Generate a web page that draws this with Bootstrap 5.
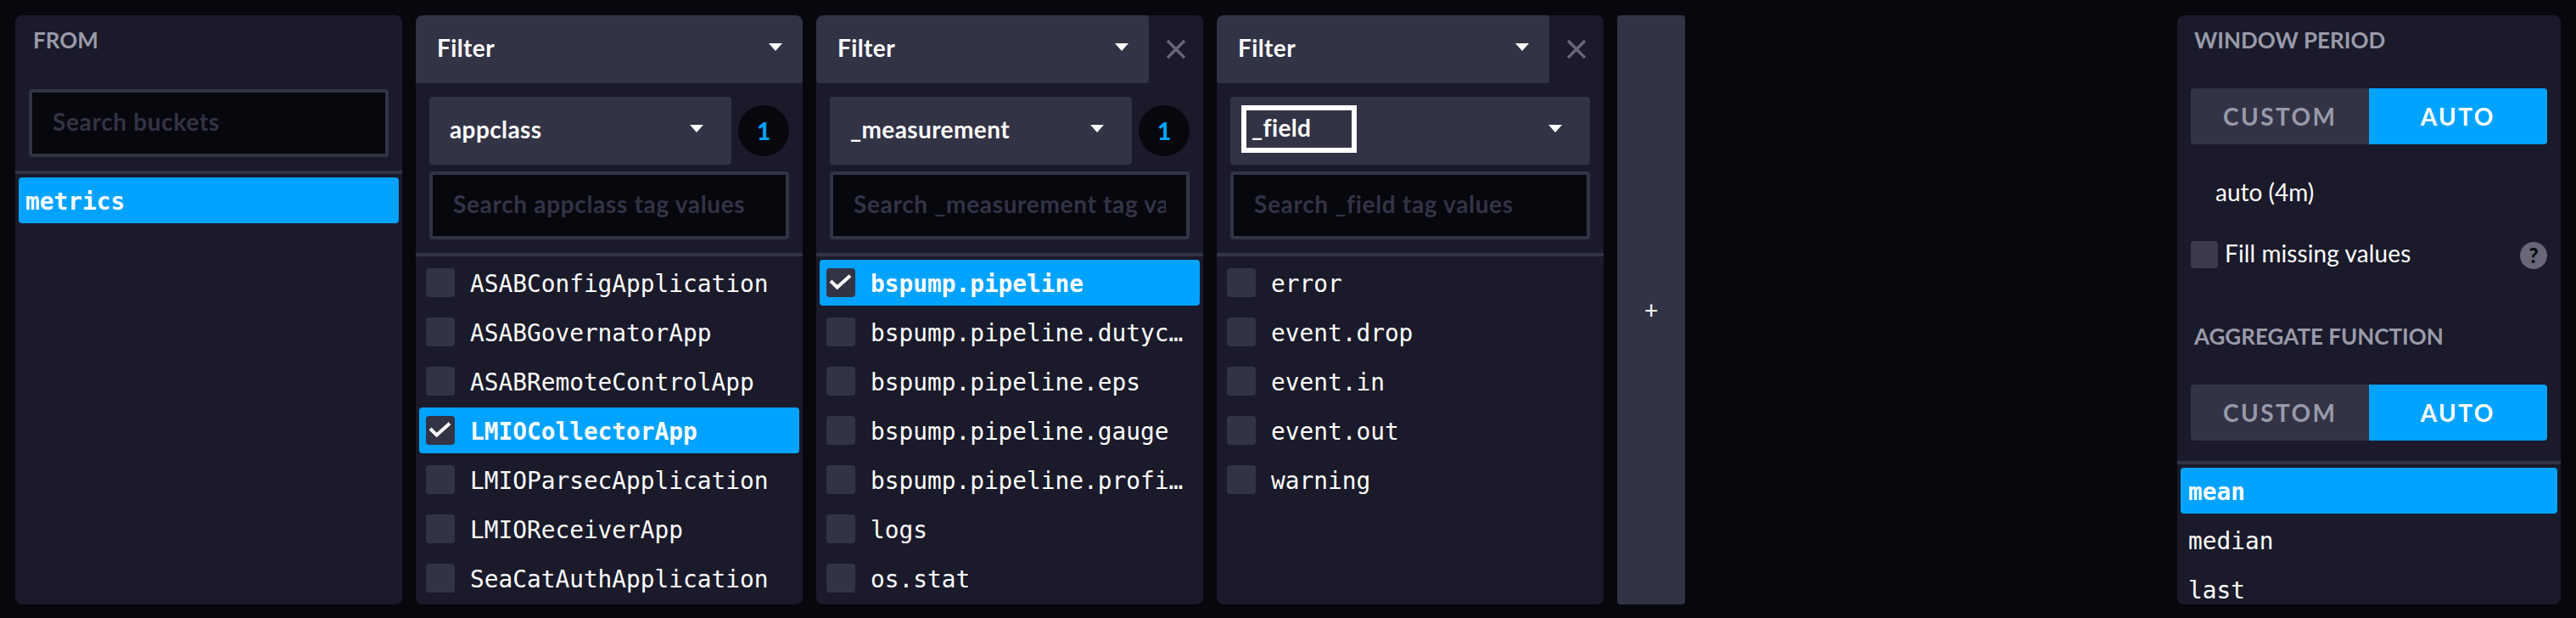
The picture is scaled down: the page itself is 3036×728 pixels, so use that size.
<!DOCTYPE html>
<html lang="en">
<head>
<meta charset="utf-8">
<title>Query builder</title>
<link href="https://cdn.jsdelivr.net/npm/bootstrap@5.3.0/dist/css/bootstrap.min.css" rel="stylesheet">
<style>
:root{--qb-page:#07070e;--qb-panel:#1a1a2a;--qb-grey:#333346;--qb-blue:#00a3ff;}
html,body{height:100%;margin:0;background:var(--qb-page);overflow:hidden;}
body{font-family:Lato,"Liberation Sans",sans-serif;color:#fff;}
.qb-root{height:728px;padding:18px 18px 16px;gap:16px;}
.qb-card{width:456px;background:var(--qb-panel);border-radius:8px;overflow:hidden;flex:none;}
.qb-side{width:452px;}
.qb-head{height:80px;flex:none;}
.qb-sel{background:var(--qb-grey);border:0;border-radius:4px;color:#fff;font-size:28px;font-weight:700;letter-spacing:.4px;display:flex;align-items:center;justify-content:space-between;text-align:left;height:80px;flex:none;--bs-btn-hover-bg:var(--qb-grey);--bs-btn-hover-color:#fff;}
.qb-sel.dropdown-toggle::after{margin:0;border-top:9px solid #fff;border-left:8px solid transparent;border-right:8px solid transparent;border-bottom:0;}
.qb-sel-h{padding:0 24px 5px 25px;border-radius:8px 8px 4px 4px;}
.qb-closable{width:392px;border-radius:8px 4px 4px 4px;}
.qb-x{width:64px;flex:none;color:#676778;}
.qb-tools{padding:16px 16px 16px;gap:8px;}
.qb-sel-k{padding:0 33px 5px 24px;}
.qb-grow{flex:1 1 0;min-width:0;}
.qb-count{width:60px;height:60px;border-radius:50%;background:var(--qb-page);color:var(--qb-blue);font-size:28px;font-weight:900;flex:none;}
.qb-search.form-control{height:80px;background:var(--qb-page);border:4px solid var(--qb-grey);border-radius:4px;padding:0 24px 4px;font-size:28px;font-weight:700;letter-spacing:.67px;color:#fff;box-shadow:none;}
.qb-search.form-control::placeholder{color:var(--qb-grey);opacity:1;}
.qb-from-title{font-size:26px;font-weight:700;color:#999aa9;line-height:32px;padding:13px 21px 0;height:87px;flex:none;}
.qb-from-search{padding:0 16px 16px;}
.qb-rule{height:4px;background:var(--qb-grey);flex:none;}
.qb-list{padding:4px;gap:4px;overflow:hidden;min-height:0;}
.qb-item{height:54px;flex:none;border-radius:4px;padding:0 16px 0 8px;gap:18px;font-family:"DejaVu Sans Mono","Liberation Mono",monospace;font-size:27.8px;color:#fff;}
.qb-item.qb-on{background:var(--qb-blue);font-weight:700;}
.qb-name{white-space:nowrap;overflow:hidden;text-overflow:ellipsis;min-width:0;padding-top:3px;}
.qb-box{width:34px;height:34px;border-radius:4px;background:var(--qb-grey);flex:none;}
.qb-box svg{display:block;}
.qb-focus{border:6px solid #fff;padding:0 0 0 6px;width:136px;height:56px;line-height:40px;margin:0 0 -1px -11px;}
.qb-add{width:80px;flex:none;background:var(--qb-grey);border:0;border-radius:4px;color:#fff;font-size:28px;font-weight:400;padding:0;--bs-btn-hover-bg:var(--qb-grey);--bs-btn-hover-color:#fff;}
.qb-side-title{padding:13px 20px 0;height:86px;}
.qb-toggle{margin:0 16px;height:66px;flex:none;}
.qb-toggle .btn{flex:1 1 0;border:0;font-size:28px;font-weight:700;letter-spacing:2.4px;display:flex;align-items:center;justify-content:center;padding:0 0 1px;--bs-btn-border-radius:4px;}
.qb-off{background:var(--qb-grey);color:#999aa9;--bs-btn-hover-bg:var(--qb-grey);--bs-btn-hover-color:#999aa9;}
.qb-act{background:var(--qb-blue);color:#fff;--bs-btn-hover-bg:var(--qb-blue);--bs-btn-hover-color:#fff;}
.qb-auto{font-size:28px;padding:0 45px;height:56px;margin-top:28px;line-height:56px;flex:none;}
.qb-fill{margin:30px 16px 0;height:32px;flex:none;font-size:28px;}
.qb-fill-label{padding-bottom:4px;letter-spacing:.1px;}
.qb-sq{width:32px;height:32px;border-radius:4px;background:#3a3a4c;flex:none;margin-right:8px;}
.qb-help{width:32px;height:32px;border-radius:50%;background:#676778;color:var(--qb-page);font-size:24px;font-weight:900;margin:1px 0 -1px auto;flex:none;}
.qb-title2{padding:64px 20px 0;height:137px;}
.qb-side-list{padding:4px 4px 0;}
.qb-side-list .qb-item{padding-left:9px;}
</style>
</head>
<body>
<div class="qb-root d-flex align-items-stretch">
  <section class="qb-card d-flex flex-column">
    <div class="qb-from-title">FROM</div>
    <div class="qb-from-search"><input class="form-control qb-search" placeholder="Search buckets"></div>
    <div class="qb-rule"></div>
    <div class="qb-list d-flex flex-column flex-grow-1">
      <div class="qb-item qb-on d-flex align-items-center"><span class="qb-name">metrics</span></div>
    </div>
  </section>

  <section class="qb-card d-flex flex-column">
    <button class="btn dropdown-toggle qb-sel qb-sel-h qb-head w-100" type="button">Filter</button>
    <div class="qb-tools d-flex flex-column">
      <div class="d-flex align-items-center gap-2">
        <button class="btn dropdown-toggle qb-sel qb-sel-k qb-grow" type="button">appclass</button>
        <div class="qb-count d-flex align-items-center justify-content-center">1</div>
      </div>
      <input class="form-control qb-search" placeholder="Search appclass tag values">
    </div>
    <div class="qb-rule"></div>
    <div class="qb-list d-flex flex-column flex-grow-1">
      <div class="qb-item d-flex align-items-center"><span class="qb-box"></span><span class="qb-name">ASABConfigApplication</span></div>
      <div class="qb-item d-flex align-items-center"><span class="qb-box"></span><span class="qb-name">ASABGovernatorApp</span></div>
      <div class="qb-item d-flex align-items-center"><span class="qb-box"></span><span class="qb-name">ASABRemoteControlApp</span></div>
      <div class="qb-item qb-on d-flex align-items-center"><span class="qb-box"><svg width="34" height="34" viewBox="0 0 34 34"><path d="M5 15 L12.7 22.5 L28 8.7" fill="none" stroke="#fff" stroke-width="4"/></svg></span><span class="qb-name">LMIOCollectorApp</span></div>
      <div class="qb-item d-flex align-items-center"><span class="qb-box"></span><span class="qb-name">LMIOParsecApplication</span></div>
      <div class="qb-item d-flex align-items-center"><span class="qb-box"></span><span class="qb-name">LMIOReceiverApp</span></div>
      <div class="qb-item d-flex align-items-center"><span class="qb-box"></span><span class="qb-name">SeaCatAuthApplication</span></div>
    </div>
  </section>

  <section class="qb-card d-flex flex-column">
    <div class="d-flex qb-head">
      <button class="btn dropdown-toggle qb-sel qb-sel-h qb-closable" type="button">Filter</button>
      <div class="qb-x d-flex align-items-center justify-content-center"><svg width="24" height="24" viewBox="0 0 24 24"><path d="M2 2 L22 22 M22 2 L2 22" stroke="#676778" stroke-width="3.4" fill="none"/></svg></div>
    </div>
    <div class="qb-tools d-flex flex-column">
      <div class="d-flex align-items-center gap-2">
        <button class="btn dropdown-toggle qb-sel qb-sel-k qb-grow" type="button">_measurement</button>
        <div class="qb-count d-flex align-items-center justify-content-center">1</div>
      </div>
      <input class="form-control qb-search" placeholder="Search _measurement tag values">
    </div>
    <div class="qb-rule"></div>
    <div class="qb-list d-flex flex-column flex-grow-1">
      <div class="qb-item qb-on d-flex align-items-center"><span class="qb-box"><svg width="34" height="34" viewBox="0 0 34 34"><path d="M5 15 L12.7 22.5 L28 8.7" fill="none" stroke="#fff" stroke-width="4"/></svg></span><span class="qb-name">bspump.pipeline</span></div>
      <div class="qb-item d-flex align-items-center"><span class="qb-box"></span><span class="qb-name">bspump.pipeline.dutycycle</span></div>
      <div class="qb-item d-flex align-items-center"><span class="qb-box"></span><span class="qb-name">bspump.pipeline.eps</span></div>
      <div class="qb-item d-flex align-items-center"><span class="qb-box"></span><span class="qb-name">bspump.pipeline.gauge</span></div>
      <div class="qb-item d-flex align-items-center"><span class="qb-box"></span><span class="qb-name">bspump.pipeline.profiler</span></div>
      <div class="qb-item d-flex align-items-center"><span class="qb-box"></span><span class="qb-name">logs</span></div>
      <div class="qb-item d-flex align-items-center"><span class="qb-box"></span><span class="qb-name">os.stat</span></div>
    </div>
  </section>

  <section class="qb-card d-flex flex-column">
    <div class="d-flex qb-head">
      <button class="btn dropdown-toggle qb-sel qb-sel-h qb-closable" type="button">Filter</button>
      <div class="qb-x d-flex align-items-center justify-content-center"><svg width="24" height="24" viewBox="0 0 24 24"><path d="M2 2 L22 22 M22 2 L2 22" stroke="#676778" stroke-width="3.4" fill="none"/></svg></div>
    </div>
    <div class="qb-tools d-flex flex-column">
      <button class="btn dropdown-toggle qb-sel qb-sel-k" type="button"><span class="qb-focus d-block">_field</span></button>
      <input class="form-control qb-search" placeholder="Search _field tag values">
    </div>
    <div class="qb-rule"></div>
    <div class="qb-list d-flex flex-column flex-grow-1">
      <div class="qb-item d-flex align-items-center"><span class="qb-box"></span><span class="qb-name">error</span></div>
      <div class="qb-item d-flex align-items-center"><span class="qb-box"></span><span class="qb-name">event.drop</span></div>
      <div class="qb-item d-flex align-items-center"><span class="qb-box"></span><span class="qb-name">event.in</span></div>
      <div class="qb-item d-flex align-items-center"><span class="qb-box"></span><span class="qb-name">event.out</span></div>
      <div class="qb-item d-flex align-items-center"><span class="qb-box"></span><span class="qb-name">warning</span></div>
    </div>
  </section>

  <button class="btn qb-add" type="button">+</button>

  <section class="qb-card qb-side d-flex flex-column ms-auto">
    <div class="qb-from-title qb-side-title">WINDOW PERIOD</div>
    <div class="btn-group qb-toggle" role="group">
      <button class="btn qb-off" type="button">CUSTOM</button>
      <button class="btn qb-act" type="button">AUTO</button>
    </div>
    <div class="qb-auto">auto (4m)</div>
    <div class="qb-fill d-flex align-items-center">
      <span class="qb-sq"></span><span class="qb-fill-label">Fill missing values</span>
      <span class="qb-help d-flex align-items-center justify-content-center">?</span>
    </div>
    <div class="qb-from-title qb-title2">AGGREGATE FUNCTION</div>
    <div class="btn-group qb-toggle" role="group">
      <button class="btn qb-off" type="button">CUSTOM</button>
      <button class="btn qb-act" type="button">AUTO</button>
    </div>
    <div class="qb-rule mt-4"></div>
    <div class="qb-list qb-side-list d-flex flex-column flex-grow-1">
      <div class="qb-item qb-on d-flex align-items-center"><span class="qb-name">mean</span></div>
      <div class="qb-item d-flex align-items-center"><span class="qb-name">median</span></div>
      <div class="qb-item d-flex align-items-center"><span class="qb-name">last</span></div>
    </div>
  </section>
</div>
<script src="https://cdn.jsdelivr.net/npm/bootstrap@5.3.0/dist/js/bootstrap.bundle.min.js"></script>
</body>
</html>
